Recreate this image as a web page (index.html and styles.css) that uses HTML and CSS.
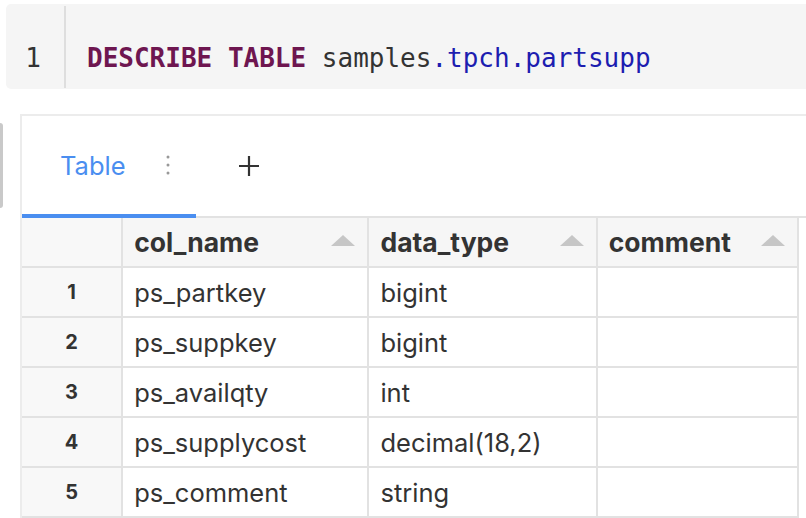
FILE: index.html
```html
<!DOCTYPE html>
<html>
<head>
<meta charset="utf-8">
<link rel="stylesheet" href="styles.css">
</head>
<body>
<div class="editor">
  <div class="gutter"><span class="ln">1</span></div>
  <div class="code"><span class="kw">DESCRIBE</span> <span class="kw">TABLE</span> <span class="id">samples</span><span class="prop">.tpch.partsupp</span></div>
</div>
<div class="results">
  <div class="handle"></div>
  <div class="panel">
    <div class="tabs">
      <div class="tab active">
        <span class="tab-label">Table</span>
        <svg class="kebab" width="4" height="20" viewBox="0 0 4 20"><circle cx="2" cy="2" r="1.5"/><circle cx="2" cy="10" r="1.5"/><circle cx="2" cy="18" r="1.5"/></svg>
      </div>
      <div class="add">
        <svg width="22" height="22" viewBox="0 0 22 22"><path d="M11 1v20M1 11h20" stroke="#333" stroke-width="2.2" fill="none"/></svg>
      </div>
    </div>
    <table class="grid">
      <colgroup><col class="c0"><col class="c1"><col class="c2"><col class="c3"></colgroup>
      <thead>
        <tr>
          <th class="idx"></th>
          <th><div class="hcell"><span>col_name</span><i class="sort"></i></div></th>
          <th><div class="hcell"><span>data_type</span><i class="sort"></i></div></th>
          <th><div class="hcell"><span>comment</span><i class="sort"></i></div></th>
        </tr>
      </thead>
      <tbody>
        <tr><td class="idx">1</td><td>ps_partkey</td><td>bigint</td><td></td></tr>
        <tr><td class="idx">2</td><td>ps_suppkey</td><td>bigint</td><td></td></tr>
        <tr><td class="idx">3</td><td>ps_availqty</td><td>int</td><td></td></tr>
        <tr><td class="idx">4</td><td>ps_supplycost</td><td>decimal(18,2)</td><td></td></tr>
        <tr><td class="idx">5</td><td>ps_comment</td><td>string</td><td></td></tr>
      </tbody>
    </table>
  </div>
</div>
</body>
</html>
```
FILE: styles.css
```css
html, body {
  margin: 0;
  padding: 0;
  background: #ffffff;
  width: 806px;
  height: 518px;
  overflow: hidden;
}
body {
  font-family: Inter, "Liberation Sans", sans-serif;
  color: #333333;
}
.editor {
  margin: 4px 0 0 6px;
  height: 85px;
  background: #f5f5f5;
  border-radius: 5px 0 0 5px;
  display: flex;
}
.gutter {
  width: 60px;
  margin: 2px 0 1px 0;
  border-right: 2px solid #dedede;
  box-sizing: border-box;
  padding-top: 32px;
  padding-right: 4px;
  text-align: center;
}
.ln, .code {
  font-family: "DejaVu Sans Mono", "Liberation Mono", monospace;
  font-size: 26px;
  line-height: 40px;
  color: #333333;
}
.code {
  padding-left: 21px;
  padding-top: 34px;
  white-space: pre;
}
.kw { color: #6e1650; font-weight: bold; }
.id { color: #333333; }
.prop { color: #1d1db0; }

.results {
  display: flex;
  margin-top: 25px;
}
.handle {
  width: 3px;
  height: 85px;
  margin-top: 9px;
  margin-right: 17px;
  background: #c9c9c9;
  border-radius: 0 3px 3px 0;
}
.panel {
  flex: 1;
  border-top: 2px solid #ececec;
  border-left: 2px solid #ececec;
}
.tabs {
  display: flex;
  height: 100px;
  border-bottom: 2px solid #e2e2e2;
}
.tab {
  width: 174px;
  box-sizing: border-box;
  padding-left: 38px;
  display: flex;
  align-items: center;
  border-bottom: 4px solid #4a8ef0;
  margin-bottom: -2px;
}
.tab-label {
  color: #4a8ef0;
  font-size: 25.5px;
  width: 106px;
}
.kebab { fill: #999999; }
.add {
  width: 106px;
  display: flex;
  align-items: center;
  justify-content: center;
}
.grid {
  border-collapse: collapse;
  table-layout: fixed;
  width: 777px;
}
.c0 { width: 100px; }
.c1 { width: 246px; }
.c2 { width: 228px; }
.c3 { width: 201px; }
.grid th, .grid td {
  border: 2px solid #e2e2e2;
  height: 48px;
  padding: 0 12px 0 11px;
  text-align: left;
  font-size: 25.5px;
  color: #333333;
  white-space: nowrap;
}
.grid thead th {
  background: #f6f6f6;
  font-weight: 700;
  font-size: 26.5px;
}
.grid tr > :first-child { border-left: none; }
.grid thead th { border-top: none; }
.grid td.idx, .grid th.idx {
  background: #f8f8f8;
  text-align: center;
  font-weight: 700;
  font-size: 20px;
  padding: 0;
}
.hcell {
  display: flex;
  align-items: center;
  justify-content: space-between;
}
.sort {
  width: 0;
  height: 0;
  border-left: 12px solid transparent;
  border-right: 12px solid transparent;
  border-bottom: 11px solid #c6c6c6;
  margin-bottom: 4px;
}
```
